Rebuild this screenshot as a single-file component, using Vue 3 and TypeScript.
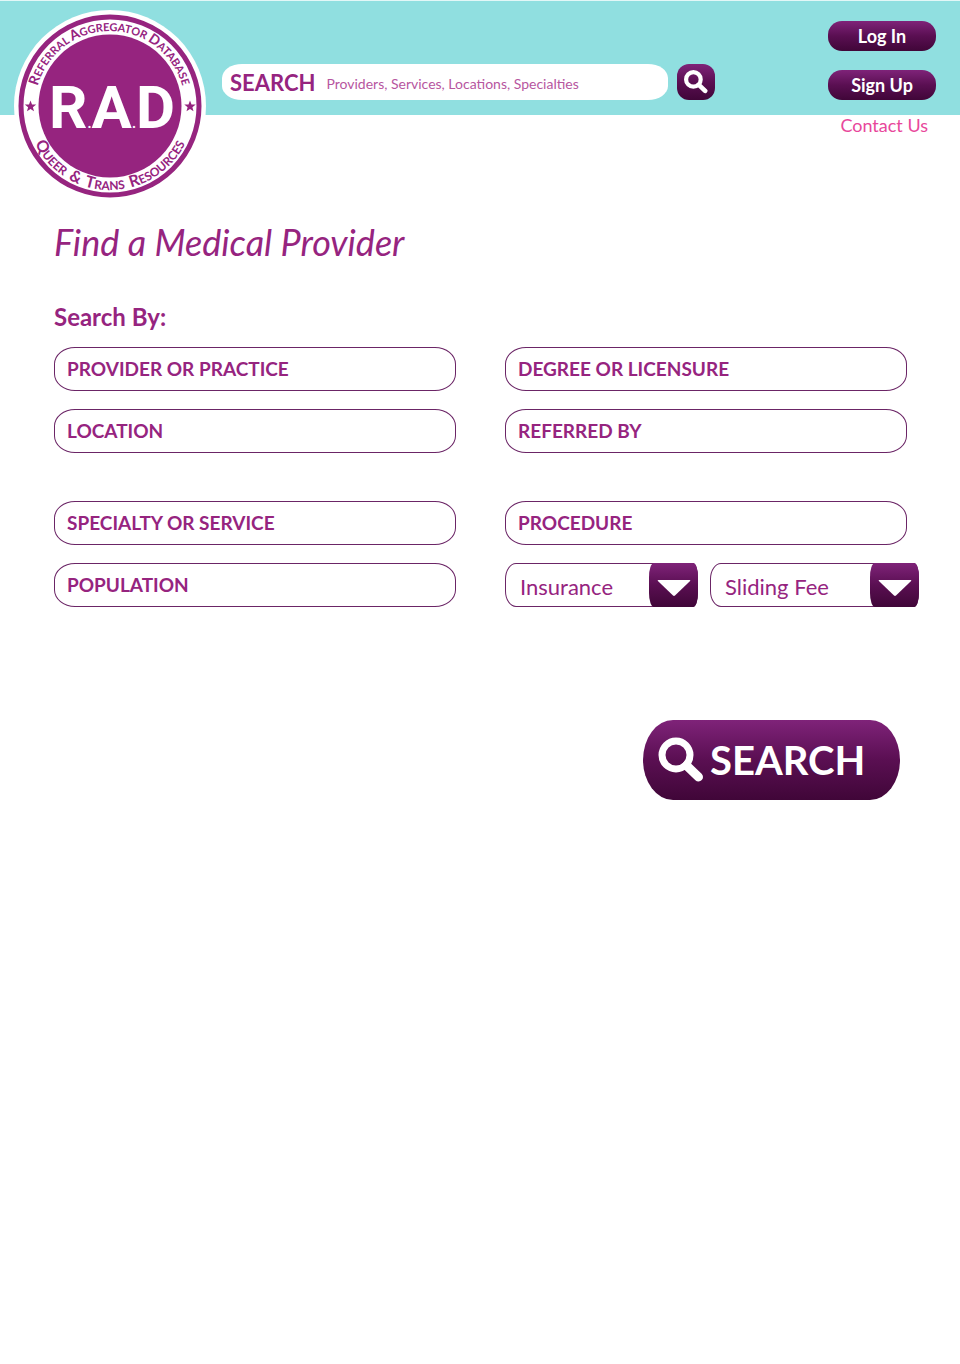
<script setup lang="ts">
import { reactive, ref } from 'vue'

interface Field {
  id: string
  label: string
}

interface Choice extends Field {
  options: string[]
}

const groups: Field[][] = [
  [
    { id: 'provider', label: 'PROVIDER OR PRACTICE' },
    { id: 'degree', label: 'DEGREE OR LICENSURE' },
    { id: 'location', label: 'LOCATION' },
    { id: 'referred', label: 'REFERRED BY' },
  ],
  [
    { id: 'specialty', label: 'SPECIALTY OR SERVICE' },
    { id: 'procedure', label: 'PROCEDURE' },
    { id: 'population', label: 'POPULATION' },
  ],
]

const choices: Choice[] = [
  { id: 'insurance', label: 'Insurance', options: ['Insurance'] },
  { id: 'fee', label: 'Sliding Fee', options: ['Sliding Fee'] },
]

const query = ref('')
const values = reactive<Record<string, string>>({
  provider: '',
  degree: '',
  location: '',
  referred: '',
  specialty: '',
  procedure: '',
  population: '',
  insurance: 'Insurance',
  fee: 'Sliding Fee',
})
</script>

<template>
  <div class="page">
    <header class="top">
      <a class="brand" href="#" aria-label="R.A.D home">
        <svg class="seal" viewBox="0 0 194 194" aria-hidden="true">
          <defs>
            <path id="arc-top" d="M 22 97 A 75 75 0 0 1 172 97" />
            <path id="arc-bottom" d="M 13 97 A 84 84 0 0 0 181 97" />
          </defs>
          <circle cx="97" cy="97" r="96" fill="#fff" />
          <circle cx="97" cy="97" r="89" fill="none" stroke="#96247f" stroke-width="5" />
          <circle cx="97" cy="97" r="71.5" fill="#96247f" />
          <text class="ring" text-anchor="middle">
            <textPath href="#arc-top" startOffset="50%">
              <tspan class="cap">R</tspan>EFERRAL <tspan class="cap">A</tspan>GGREGATOR <tspan class="cap">D</tspan>ATABASE
            </textPath>
          </text>
          <text class="ring low" text-anchor="middle">
            <textPath href="#arc-bottom" startOffset="50%">
              <tspan class="cap">Q</tspan>UEER&#160; <tspan class="cap">&amp;</tspan>&#160; <tspan class="cap">T</tspan>RANS&#160; <tspan class="cap">R</tspan>ESOURCES
            </textPath>
          </text>
          <g fill="#96247f">
            <path d="M17.500 91.500l1.500 3.900 4.200.2-3.300 2.600 1.100 4-3.500-2.300-3.500 2.300 1.100-4-3.300-2.600 4.200-.2z" />
            <path d="M177 91.500l1.500 3.900 4.200.2-3.300 2.600 1.100 4-3.500-2.300-3.500 2.300 1.100-4-3.300-2.600 4.200-.2z" />
          </g>
          <text class="letters" x="99" y="119" text-anchor="middle">R<tspan class="dot">.</tspan>A<tspan class="dot">.</tspan>D</text>
        </svg>
      </a>

      <form class="quick" role="search" @submit.prevent>
        <div class="quick-box">
          <label for="quick">SEARCH</label>
          <input id="quick" v-model="query" type="text" placeholder="Providers, Services, Locations, Specialties" />
        </div>
        <button class="quick-go" type="submit" aria-label="Search">
          <svg viewBox="0 0 46 46" aria-hidden="true">
            <circle cx="18" cy="18" r="14" />
            <path d="M28.500 28.500L40.500 40" />
          </svg>
        </button>
      </form>

      <nav class="account">
        <button class="pill" type="button">Log In</button>
        <button class="pill" type="button">Sign Up</button>
        <a href="#">Contact Us</a>
      </nav>
    </header>

    <main class="finder">
      <h1>Find a Medical Provider</h1>
      <h2>Search By:</h2>
      <form @submit.prevent>
        <div v-for="(group, g) in groups" :key="g" class="group">
          <input
            v-for="field in group"
            :id="field.id"
            :key="field.id"
            v-model="values[field.id]"
            class="field"
            type="text"
            :placeholder="field.label"
            :aria-label="field.label"
          />
          <div v-if="g === 1" class="choices">
            <div v-for="choice in choices" :key="choice.id" class="choice" :class="choice.id">
              <select :id="choice.id" v-model="values[choice.id]" :aria-label="choice.label">
                <option v-for="option in choice.options" :key="option">{{ option }}</option>
              </select>
              <span class="arrow" aria-hidden="true">
                <svg viewBox="0 0 34 17"><path d="M1.500 0h31q1.500 0 .6 1L18 15.500q-1 .8-2 0L.9 1Q0 0 1.500 0z" fill="#fff" /></svg>
              </span>
            </div>
          </div>
        </div>
        <div class="submit-row">
          <button class="submit" type="submit">
            <svg viewBox="0 0 46 46" aria-hidden="true">
              <circle cx="18" cy="18" r="14" />
              <path d="M28.500 28.500L40.500 40" />
            </svg>
            SEARCH
          </button>
        </div>
      </form>
    </main>
  </div>
</template>

<style>
body {
  margin: 0;
  background: #fff;
}
</style>

<style scoped>
.page {
  color: #96247f;
  font-family: Lato, "Liberation Sans", sans-serif;
}

.page * {
  box-sizing: border-box;
}

button,
input,
select {
  margin: 0;
  border: 0;
  color: inherit;
  font-family: inherit;
}

button {
  color: #fff;
  background: linear-gradient(#7f2379, #5a0f52 50%, #400638);
  cursor: pointer;
}

a {
  text-decoration: none;
}

.top {
  display: flex;
  align-items: flex-start;
  height: 115px;
  padding: 0 24px 0 13px;
  border-top: 1px solid #e2f7f7;
  background: #90dfe0;
}

.brand {
  flex: none;
  width: 194px;
  margin-top: 8px;
}

.seal {
  display: block;
  width: 100%;
}

.ring {
  fill: #96247f;
  font-size: 11px;
  font-weight: 700;
}

.ring.low {
  font-size: 12px;
}

.cap {
  font-size: 14px;
}

.low .cap {
  font-size: 16px;
}

.letters {
  fill: #fff;
  font-family: Roboto, "Liberation Sans", sans-serif;
  font-size: 60px;
  font-weight: 700;
}

.dot {
  font-size: 14px;
}

.quick {
  display: flex;
  flex: 0 1 493px;
  gap: 9px;
  margin: 63px 0 0 15px;
}

.quick-box {
  display: flex;
  flex: 1;
  align-items: center;
  gap: 11px;
  min-width: 0;
  height: 36px;
  padding: 0 20px 0 8px;
  border-radius: 20px / 14px;
  background: #fff;
}

.quick-box label {
  font-size: 22px;
  font-weight: 700;
}

.quick-box input {
  flex: 1;
  min-width: 0;
  padding: 2px 0 0;
  outline: 0;
  background: none;
  font-size: 14px;
}

.quick-box input::placeholder {
  color: #b7569f;
  opacity: 1;
}

.quick-go {
  display: grid;
  place-items: center;
  width: 38px;
  height: 36px;
  padding: 0;
  border-radius: 12px;
}

.quick-go svg,
.submit svg {
  fill: none;
  stroke: #fff;
  stroke-width: 7;
  stroke-linecap: round;
}

.quick-go svg {
  width: 24px;
  stroke-width: 8;
}

.quick-go path,
.submit path {
  stroke-width: 9;
}

.account {
  display: flex;
  flex: none;
  flex-direction: column;
  gap: 19px;
  width: 108px;
  margin: 20px 0 0 auto;
}

.pill {
  height: 30px;
  padding: 0;
  border-radius: 14px;
  font-size: 18px;
  font-weight: 700;
  line-height: 28px;
}

.account a {
  margin: -6px 8px 0 0;
  color: #e8479b;
  font-size: 18px;
  line-height: 24px;
  text-align: right;
}

.finder {
  padding: 97px 53px 40px 54px;
}

h1 {
  margin: 0;
  font-size: 36px;
  font-style: italic;
  font-weight: 400;
  line-height: 60px;
}

h2 {
  margin: 30px 0 15px;
  font-size: 24px;
  font-weight: 700;
  line-height: 30px;
}

.group {
  display: grid;
  grid-template-columns: 1fr 1fr;
  gap: 18px 49px;
}

.group + .group {
  margin-top: 48px;
}

.field {
  width: 100%;
  min-width: 0;
  height: 44px;
  padding: 0 12px 2px;
  border: 1px solid #6b2566;
  border-radius: 21px / 17px;
  background: #fff;
  font-size: 19px;
  font-weight: 700;
}

.field::placeholder {
  color: #96247f;
  opacity: 1;
}

.choices {
  display: flex;
  gap: 12px;
  margin-right: -12px;
}

.choice {
  position: relative;
  flex: 193 1 0;
  min-width: 0;
}

.choice.fee {
  flex-grow: 209;
}

.choice select {
  width: 100%;
  height: 44px;
  padding: 2px 52px 0 14px;
  border: 1px solid #6b2566;
  border-radius: 11px 5px 5px 11px / 16px 14px 14px 16px;
  outline: 0;
  appearance: none;
  background: #fff;
  font-size: 22px;
}

.arrow {
  position: absolute;
  top: 0;
  right: 0;
  display: grid;
  place-items: center;
  width: 49px;
  height: 44px;
  padding-top: 6px;
  border-radius: 5px / 14px;
  background: linear-gradient(#7f2379, #5a0f52 50%, #400638);
  pointer-events: none;
}

.arrow svg {
  width: 34px;
}

.submit-row {
  display: flex;
  justify-content: flex-end;
  margin-top: 113px;
  padding-right: 7px;
}

.submit {
  display: flex;
  align-items: center;
  gap: 6px;
  width: 257px;
  height: 80px;
  padding: 0 0 0 15px;
  border-radius: 30px / 40px;
  font-size: 40px;
  font-weight: 700;
}

.submit svg {
  flex: none;
  width: 46px;
}
</style>
